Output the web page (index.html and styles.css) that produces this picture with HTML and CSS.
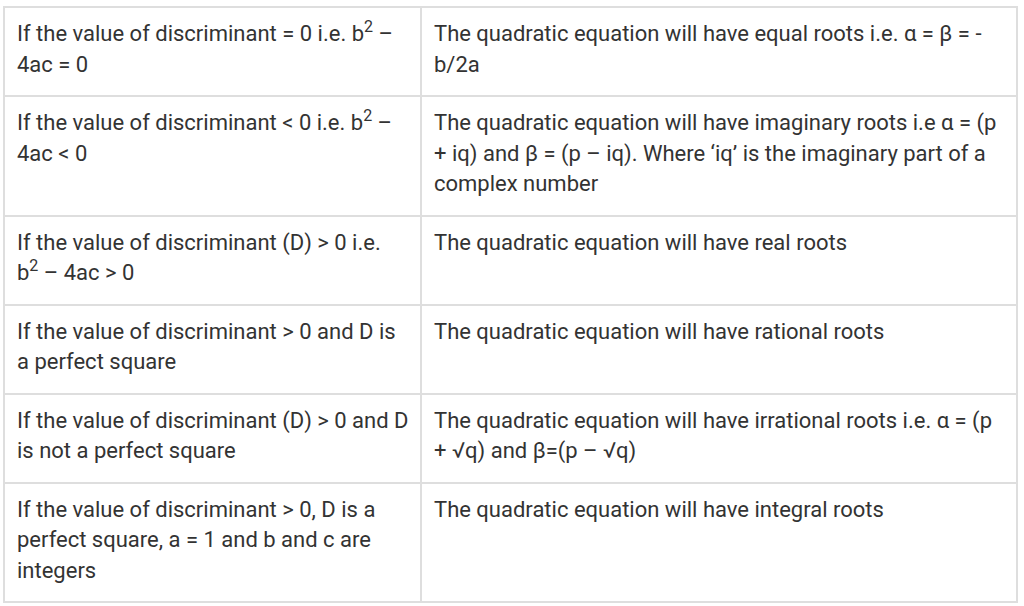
FILE: index.html
```html
<!DOCTYPE html>
<html>
<head>
<meta charset="utf-8">
<link rel="stylesheet" href="styles.css">
</head>
<body>
<table class="roots">
  <colgroup>
    <col class="col-cond">
    <col class="col-res">
  </colgroup>
  <tr>
    <td>If the value of discriminant = 0 i.e. b<sup>2</sup> – 4ac = 0</td>
    <td>The quadratic equation will have equal roots i.e. α = β = -b/2a</td>
  </tr>
  <tr>
    <td>If the value of discriminant &lt; 0 i.e. b<sup>2</sup> – 4ac &lt; 0</td>
    <td>The quadratic equation will have imaginary roots i.e α = (p + iq) and β = (p – iq). Where ‘iq’ is the imaginary part of a complex number</td>
  </tr>
  <tr>
    <td>If the value of discriminant (D) &gt; 0 i.e. <span class="formula">b<sup>2</sup> – 4ac &gt; 0</span></td>
    <td>The quadratic equation will have real roots</td>
  </tr>
  <tr>
    <td>If the value of discriminant &gt; 0 and D is a perfect square</td>
    <td>The quadratic equation will have rational roots</td>
  </tr>
  <tr>
    <td>If the value of discriminant (D) &gt; 0 and D is not a perfect square</td>
    <td>The quadratic equation will have irrational roots i.e. α = (p + √q) and β=(p – √q)</td>
  </tr>
  <tr>
    <td>If the value of discriminant &gt; 0, D is a perfect square, a = 1 and b and c are integers</td>
    <td>The quadratic equation will have integral roots</td>
  </tr>
</table>
</body>
</html>
```
FILE: styles.css
```css
html, body {
  margin: 0;
  padding: 0;
  background: #ffffff;
}
.roots {
  border-collapse: collapse;
  margin: 6px 0 0 3px;
  width: 1015px;
  table-layout: fixed;
  font-family: Roboto, "Liberation Sans", sans-serif;
  font-size: 22px;
  line-height: 30.5px;
  color: #333333;
}
.col-cond {
  width: 417px;
}
.roots td {
  border: 2px solid #dedede;
  padding: 11px 11px 15px 12px;
  vertical-align: top;
  text-align: left;
}
.roots sup {
  font-size: 16px;
  line-height: 0;
  vertical-align: 9px;
}
.formula {
  white-space: nowrap;
}
```
